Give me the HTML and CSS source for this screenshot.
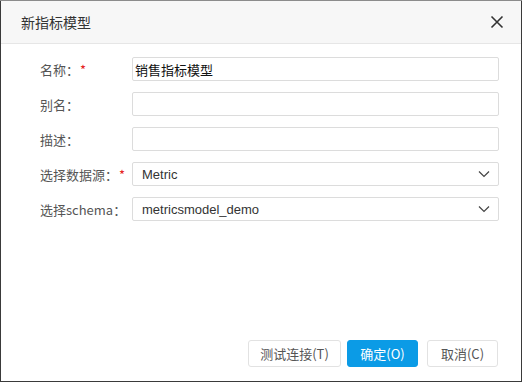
FILE: index.html
```html
<!DOCTYPE html>
<html lang="zh">
<head>
<meta charset="utf-8">
<link rel="stylesheet" href="styles.css">
</head>
<body>
<div class="dialog">
  <div class="header">
    <span class="title">新指标模型</span>
    <svg class="close" width="14" height="14" viewBox="0 0 14 14"><path d="M1.5 1.5 L12.5 12.5 M12.5 1.5 L1.5 12.5" stroke="#333" stroke-width="1.6" fill="none"/></svg>
  </div>
  <div class="body">
    <div class="row"><label class="label">名称：<span class="req">*</span></label><div class="field"><span class="value strong">销售指标模型</span></div></div>
    <div class="row"><label class="label">别名：</label><div class="field"></div></div>
    <div class="row"><label class="label">描述：</label><div class="field"></div></div>
    <div class="row"><label class="label">选择数据源：<span class="req">*</span></label><div class="field select"><span class="value pad">Metric</span><svg class="arrow" width="12" height="8" viewBox="0 0 12 8"><path d="M1 1.5 L6 6.5 L11 1.5" stroke="#444" stroke-width="1.2" fill="none"/></svg></div></div>
    <div class="row"><label class="label">选择schema：</label><div class="field select"><span class="value pad">metricsmodel_demo</span><svg class="arrow" width="12" height="8" viewBox="0 0 12 8"><path d="M1 1.5 L6 6.5 L11 1.5" stroke="#444" stroke-width="1.2" fill="none"/></svg></div></div>
  </div>
  <div class="footer">
    <button class="btn test">测试连接(T)</button>
    <button class="btn primary">确定(O)</button>
    <button class="btn cancel">取消(C)</button>
  </div>
</div>
</body>
</html>
```
FILE: styles.css
```css
html, body {
  margin: 0;
  padding: 0;
}
body {
  width: 522px;
  height: 382px;
  background: #3a3a3a;
  font-family: "Noto Sans CJK SC", "Noto Sans", sans-serif;
  padding: 0 1px 1px 1px;
  box-sizing: border-box;
  border-top: 1px solid #8c8c8c;
}
.dialog {
  width: 520px;
  height: 380px;
  background: #fff;
  display: flex;
  flex-direction: column;
}
.header {
  height: 42px;
  background: #f7f7f7;
  border-bottom: 1px solid #e6e6e6;
  display: flex;
  align-items: center;
  justify-content: space-between;
  padding: 0 17px 0 20px;
}
.title {
  font-size: 14px;
  color: #333;
}
.close {
  display: block;
}
.body {
  flex: 1;
  padding: 13px 22px 0 39px;
  display: flex;
  flex-direction: column;
  gap: 11px;
}
.row {
  display: flex;
  align-items: center;
  height: 24px;
}
.label {
  width: 92px;
  flex: none;
  font-size: 13px;
  color: #555;
}
.req {
  color: #e52222;
  margin-left: 1px;
}
.field {
  flex: 1;
  height: 24px;
  box-sizing: border-box;
  border: 1px solid #dcdcdc;
  border-radius: 2px;
  display: flex;
  align-items: center;
  justify-content: space-between;
  padding: 0 8px 0 2px;
}
.value {
  font-size: 13px;
  color: #333;
  font-family: "Liberation Sans", "Noto Sans CJK SC", sans-serif;
}
.value.strong {
  color: #111;
  font-family: "Noto Sans CJK SC", sans-serif;
}
.value.pad {
  padding-left: 7px;
}
.arrow {
  display: block;
}
.footer {
  display: flex;
  justify-content: flex-end;
  padding: 0 23px 14px 0;
}
.btn {
  height: 27px;
  box-sizing: border-box;
  border: 1px solid #e2e2e2;
  border-radius: 3px;
  background: #fff;
  color: #555;
  font-family: "Noto Sans CJK SC", sans-serif;
  font-size: 13px;
  padding: 0;
}
.test {
  width: 93px;
}
.primary {
  width: 71px;
  margin-left: 6px;
  background: #0b9be6;
  border-color: #0b9be6;
  color: #fff;
}
.cancel {
  width: 71px;
  margin-left: 9px;
}
```
